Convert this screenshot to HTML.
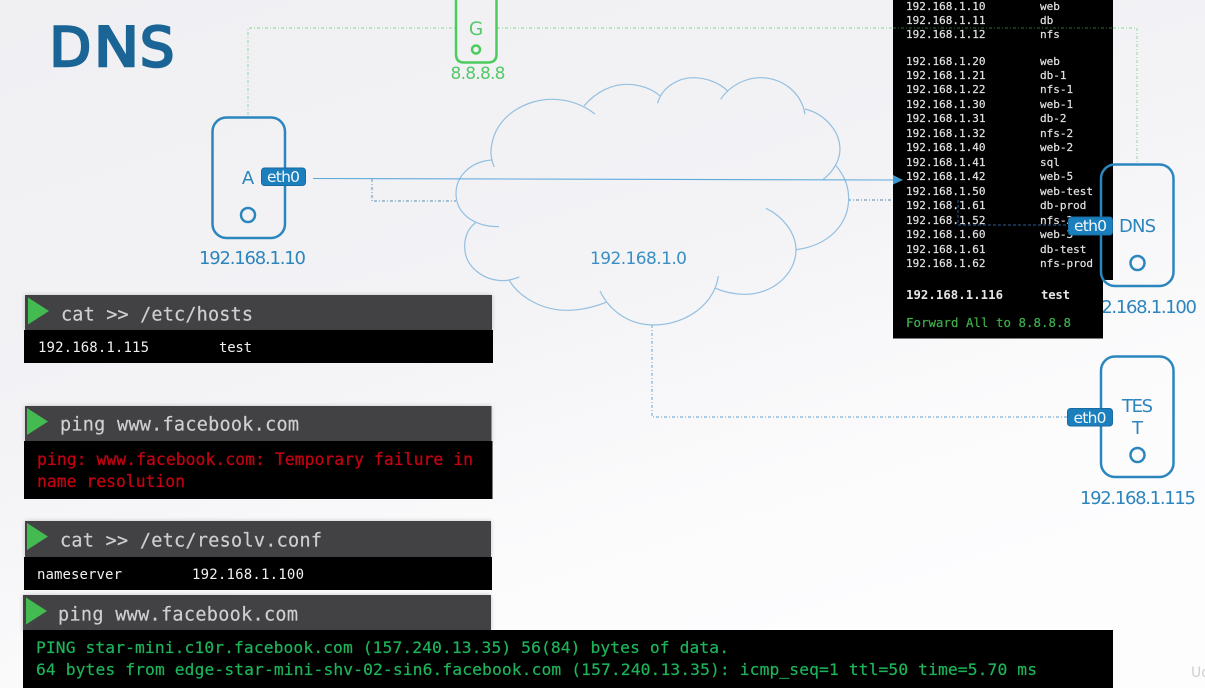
<!DOCTYPE html>
<html><head><meta charset="utf-8"><style>
html,body{margin:0;padding:0;background:#f4f4f6;overflow:hidden}
svg{display:block;filter:blur(.3px)}
.m{font-family:"DejaVu Sans Mono","Liberation Mono",monospace}
.s{font-family:"DejaVu Sans","Liberation Sans",sans-serif}
.h{font-size:18.5px;fill:#cfcfcf;stroke:#cfcfcf;stroke-width:.2px}
.r{font-size:11px;fill:#e2e2e2;stroke:#e2e2e2;stroke-width:.2px}
.l{fill:#2d85bd;font-size:18px}
.e{fill:#f2f7fb;font-size:15.5px}
.hd{fill:#434244;filter:url(#sh)}
</style></head><body>
<svg xmlns="http://www.w3.org/2000/svg" width="1205" height="688" viewBox="0 0 1205 688">
<defs>
<linearGradient id="bg" x1="0" y1="0" x2="0.55" y2="1"><stop offset="0" stop-color="#f0f0f3"/><stop offset="0.5" stop-color="#f3f3f6"/><stop offset="0.8" stop-color="#fbfbfc"/><stop offset="1" stop-color="#fdfdfe"/></linearGradient>
<filter id="sh" x="-3%" y="-20%" width="106%" height="140%"><feDropShadow dx="0" dy="0" stdDeviation="2" flood-color="#000" flood-opacity="0.22"/></filter>
</defs>
<rect width="1205" height="688" fill="url(#bg)"/>

<g class="s" font-size="54" fill="#1b6596" stroke="#1b6596" stroke-width="2.600">
<text x="49.500" y="66">D</text>
<text x="94" y="66" textLength="45" lengthAdjust="spacingAndGlyphs">N</text>
<text x="140" y="66">S</text>
</g>

<path d="M248 115V28H455M497 28H1137V164" fill="none" stroke="#86d696" stroke-width=".9" stroke-dasharray="3 2 1 2"/>
<path d="M372 179V201H456" fill="none" stroke="#4c8abb" stroke-width=".9" stroke-dasharray="3 2 1 2"/>
<path d="M848 200H958" fill="none" stroke="#4c8abb" stroke-width=".9" stroke-dasharray="3 2 1 2"/>
<path d="M652 325V417H1067" fill="none" stroke="#5a9fce" stroke-width=".9" stroke-dasharray="3 2 1 2"/>

<g transform="translate(440 70) scale(.3333)" fill="none" stroke="#93bfe0" stroke-width="3.600">
<path d="M162 291C152 262 151 245 155 225C170 135 260 88 335 88C385 88 430 105 465 132"/>
<path d="M432 108C470 62 520 43 560 43C600 43 640 58 660 78"/>
<path d="M653 100C665 52 715 23 760 23C800 23 840 40 862 62"/>
<path d="M842 88C870 45 920 23 960 23C1030 23 1085 70 1095 133"/>
<path d="M1095 117C1150 130 1200 180 1200 238C1200 270 1180 305 1150 328"/>
<path d="M1188 287C1215 320 1226 350 1226 385C1226 460 1170 525 1070 539"/>
<path d="M978 415C1030 440 1068 490 1068 540C1068 610 1000 673 915 673C880 673 850 665 827 655"/>
<path d="M835 618C825 700 740 765 640 765C570 765 510 725 480 663"/>
<path d="M498 697C460 712 420 721 380 721C310 721 240 685 207 630"/>
<path d="M238 621C220 628 205 632 190 632C130 632 74 590 74 530C74 500 85 475 107 458"/>
<path d="M177 470C100 470 48 430 48 370C48 320 90 275 155 270"/>
</g>
<text x="638.500" y="264" text-anchor="middle" class="s" font-size="17" fill="#3a8fc2" textLength="97">192.168.1.0</text>

<!-- Box A -->
<rect x="212.500" y="117.500" width="72.500" height="120.500" rx="14" fill="none" stroke="#2a86bd" stroke-width="2.500"/>
<text x="248" y="184" text-anchor="middle" class="s l" font-size="18">A</text>
<circle cx="248" cy="215" r="7" fill="none" stroke="#2a86bd" stroke-width="2.500"/>
<rect x="261.500" y="168" width="44" height="17.500" rx="3" fill="#1c7fbd" stroke="#176ba1"/>
<text x="283.500" y="182" text-anchor="middle" class="s e" textLength="33">eth0</text>
<text x="252.500" y="264" text-anchor="middle" class="s l" font-size="17" textLength="107">192.168.1.10</text>

<!-- Box G -->
<path d="M456 -5V54Q456 62.500 464 62.500H488Q496.500 62.500 496.500 54V-5" fill="none" stroke="#4ccb5f" stroke-width="2.500"/>
<text x="476" y="35" text-anchor="middle" class="s" font-size="18.500" fill="#55c868">G</text>
<circle cx="476" cy="49.500" r="4" fill="none" stroke="#4ccb5f" stroke-width="2.500"/>
<text x="478" y="79" text-anchor="middle" class="s" font-size="17" fill="#55c868" textLength="55">8.8.8.8</text>

<text x="1197" y="313" text-anchor="end" class="s l" textLength="116">192.168.1.100</text>

<!-- Hosts panel -->
<path d="M893 0H1113V280H1103V338.500H893Z" fill="#000"/>
<g class="m r">
<text x="906" y="10">192.168.1.10</text><text x="1040" y="10">web</text>
<text x="906" y="24">192.168.1.11</text><text x="1040" y="24">db</text>
<text x="906" y="38">192.168.1.12</text><text x="1040" y="38">nfs</text>
<text x="906" y="65">192.168.1.20</text><text x="1040" y="65">web</text>
<text x="906" y="79">192.168.1.21</text><text x="1040" y="79">db-1</text>
<text x="906" y="93">192.168.1.22</text><text x="1040" y="93">nfs-1</text>
<text x="906" y="108">192.168.1.30</text><text x="1040" y="108">web-1</text>
<text x="906" y="122">192.168.1.31</text><text x="1040" y="122">db-2</text>
<text x="906" y="137">192.168.1.32</text><text x="1040" y="137">nfs-2</text>
<text x="906" y="151">192.168.1.40</text><text x="1040" y="151">web-2</text>
<text x="906" y="166">192.168.1.41</text><text x="1040" y="166">sql</text>
<text x="906" y="180">192.168.1.42</text><text x="1040" y="180">web-5</text>
<text x="906" y="195">192.168.1.50</text><text x="1040" y="195">web-test</text>
<text x="906" y="209">192.168.1.61</text><text x="1040" y="209">db-prod</text>
<text x="906" y="224">192.168.1.52</text><text x="1040" y="224">nfs-3</text>
<text x="906" y="238">192.168.1.60</text><text x="1040" y="238">web-3</text>
<text x="906" y="253">192.168.1.61</text><text x="1040" y="253">db-test</text>
<text x="906" y="267">192.168.1.62</text><text x="1040" y="267">nfs-prod</text>
</g>
<text x="906" y="299" class="m" font-size="12.300" font-weight="bold" fill="#e6e6e6" textLength="97">192.168.1.116</text>
<text x="1041" y="299" class="m" font-size="12.300" font-weight="bold" fill="#e6e6e6" textLength="29">test</text>
<text x="906" y="327" class="m" font-size="12.400" fill="#3fae4c" stroke="#3fae4c" stroke-width=".2" textLength="165">Forward All to 8.8.8.8</text>

<path d="M893 28H1113" stroke="#2f6a38" stroke-width=".9" stroke-dasharray="3 2 1 2" fill="none"/>
<path d="M958 200V225H1068" fill="none" stroke="#2b5f98" stroke-width=".9" stroke-dasharray="3 2"/>
<path d="M313 178.500L893 180" stroke="#5ea9da" stroke-width="1.100" fill="none"/>
<path d="M893 175L903 180L893 184.500Z" fill="#3f97d0"/>

<!-- DNS box -->
<rect x="1101" y="164.500" width="72.500" height="121.500" rx="14" fill="none" stroke="#2a86bd" stroke-width="2.500"/>
<rect x="1068.500" y="217" width="44" height="18" rx="3" fill="#1c7fbd" stroke="#176ba1"/>
<text x="1090.500" y="231" text-anchor="middle" class="s e" textLength="33">eth0</text>
<text x="1137.500" y="232" text-anchor="middle" class="s l" textLength="37">DNS</text>
<circle cx="1137.500" cy="263" r="7" fill="none" stroke="#2a86bd" stroke-width="2.500"/>

<!-- TEST box -->
<rect x="1101" y="356.500" width="72.500" height="120.500" rx="14" fill="none" stroke="#2a86bd" stroke-width="2.500"/>
<rect x="1067.500" y="408.500" width="45" height="17.500" rx="3" fill="#1c7fbd" stroke="#176ba1"/>
<text x="1090" y="423" text-anchor="middle" class="s e" textLength="33">eth0</text>
<text x="1137.500" y="412" text-anchor="middle" class="s l" textLength="31">TES</text>
<text x="1137.500" y="434" text-anchor="middle" class="s l">T</text>
<circle cx="1137.500" cy="455" r="7" fill="none" stroke="#2a86bd" stroke-width="2.500"/>
<text x="1138" y="504" text-anchor="middle" class="s l" textLength="116">192.168.1.115</text>

<!-- Terminal 1 -->
<rect class="hd" x="25" y="295" width="467" height="36"/>
<rect x="24" y="330" width="469" height="33" fill="#000"/>
<path d="M28 297.500L49 311L28 324.500Z" fill="#43bb50"/>
<text x="61" y="320.500" class="m h" textLength="192">cat &gt;&gt; /etc/hosts</text>
<text x="38" y="352" class="m" font-size="14" fill="#f0f0f0" textLength="111">192.168.1.115</text>
<text x="219" y="352" class="m" font-size="14" fill="#f0f0f0" textLength="33">test</text>

<!-- Terminal 2 -->
<rect class="hd" x="25" y="406" width="466.500" height="36"/>
<rect x="24" y="441" width="468.500" height="58" fill="#000"/>
<path d="M27 408L48 421.500L27 435Z" fill="#43bb50"/>
<text x="60" y="430.500" class="m h" textLength="239">ping www.facebook.com</text>
<text x="37" y="465" class="m" font-size="16.400" fill="#c40012" stroke="#c40012" stroke-width=".25" textLength="436">ping: www.facebook.com: Temporary failure in</text>
<text x="37" y="487" class="m" font-size="16.400" fill="#c40012" stroke="#c40012" stroke-width=".25" textLength="148">name resolution</text>

<!-- Terminal 3 -->
<rect class="hd" x="25" y="521" width="466" height="37"/>
<rect x="24" y="557" width="468" height="33" fill="#000"/>
<path d="M27 523L48 536.500L27 550Z" fill="#43bb50"/>
<text x="60" y="546.500" class="m h" textLength="262">cat &gt;&gt; /etc/resolv.conf</text>
<text x="37" y="579" class="m" font-size="14" fill="#f0f0f0" textLength="85">nameserver</text>
<text x="192" y="579" class="m" font-size="14" fill="#f0f0f0" textLength="112">192.168.1.100</text>

<!-- Terminal 4 -->
<rect class="hd" x="23" y="595" width="468" height="36"/>
<rect x="23" y="630" width="1090" height="58" fill="#000"/>
<path d="M26 597.500L47 611L26 624.500Z" fill="#43bb50"/>
<text x="58" y="620.500" class="m h" textLength="240">ping www.facebook.com</text>
<text x="36" y="653" class="m" font-size="16.300" fill="#1db45a" stroke="#1db45a" stroke-width=".2" textLength="693">PING star-mini.c10r.facebook.com (157.240.13.35) 56(84) bytes of data.</text>
<text x="36" y="675" class="m" font-size="16.300" fill="#1db45a" stroke="#1db45a" stroke-width=".2" textLength="1001">64 bytes from edge-star-mini-shv-02-sin6.facebook.com (157.240.13.35): icmp_seq=1 ttl=50 time=5.70 ms</text>

<text x="1191" y="677" class="s" font-size="14" fill="#cfcfcf">Ud</text>
</svg>
</body></html>
